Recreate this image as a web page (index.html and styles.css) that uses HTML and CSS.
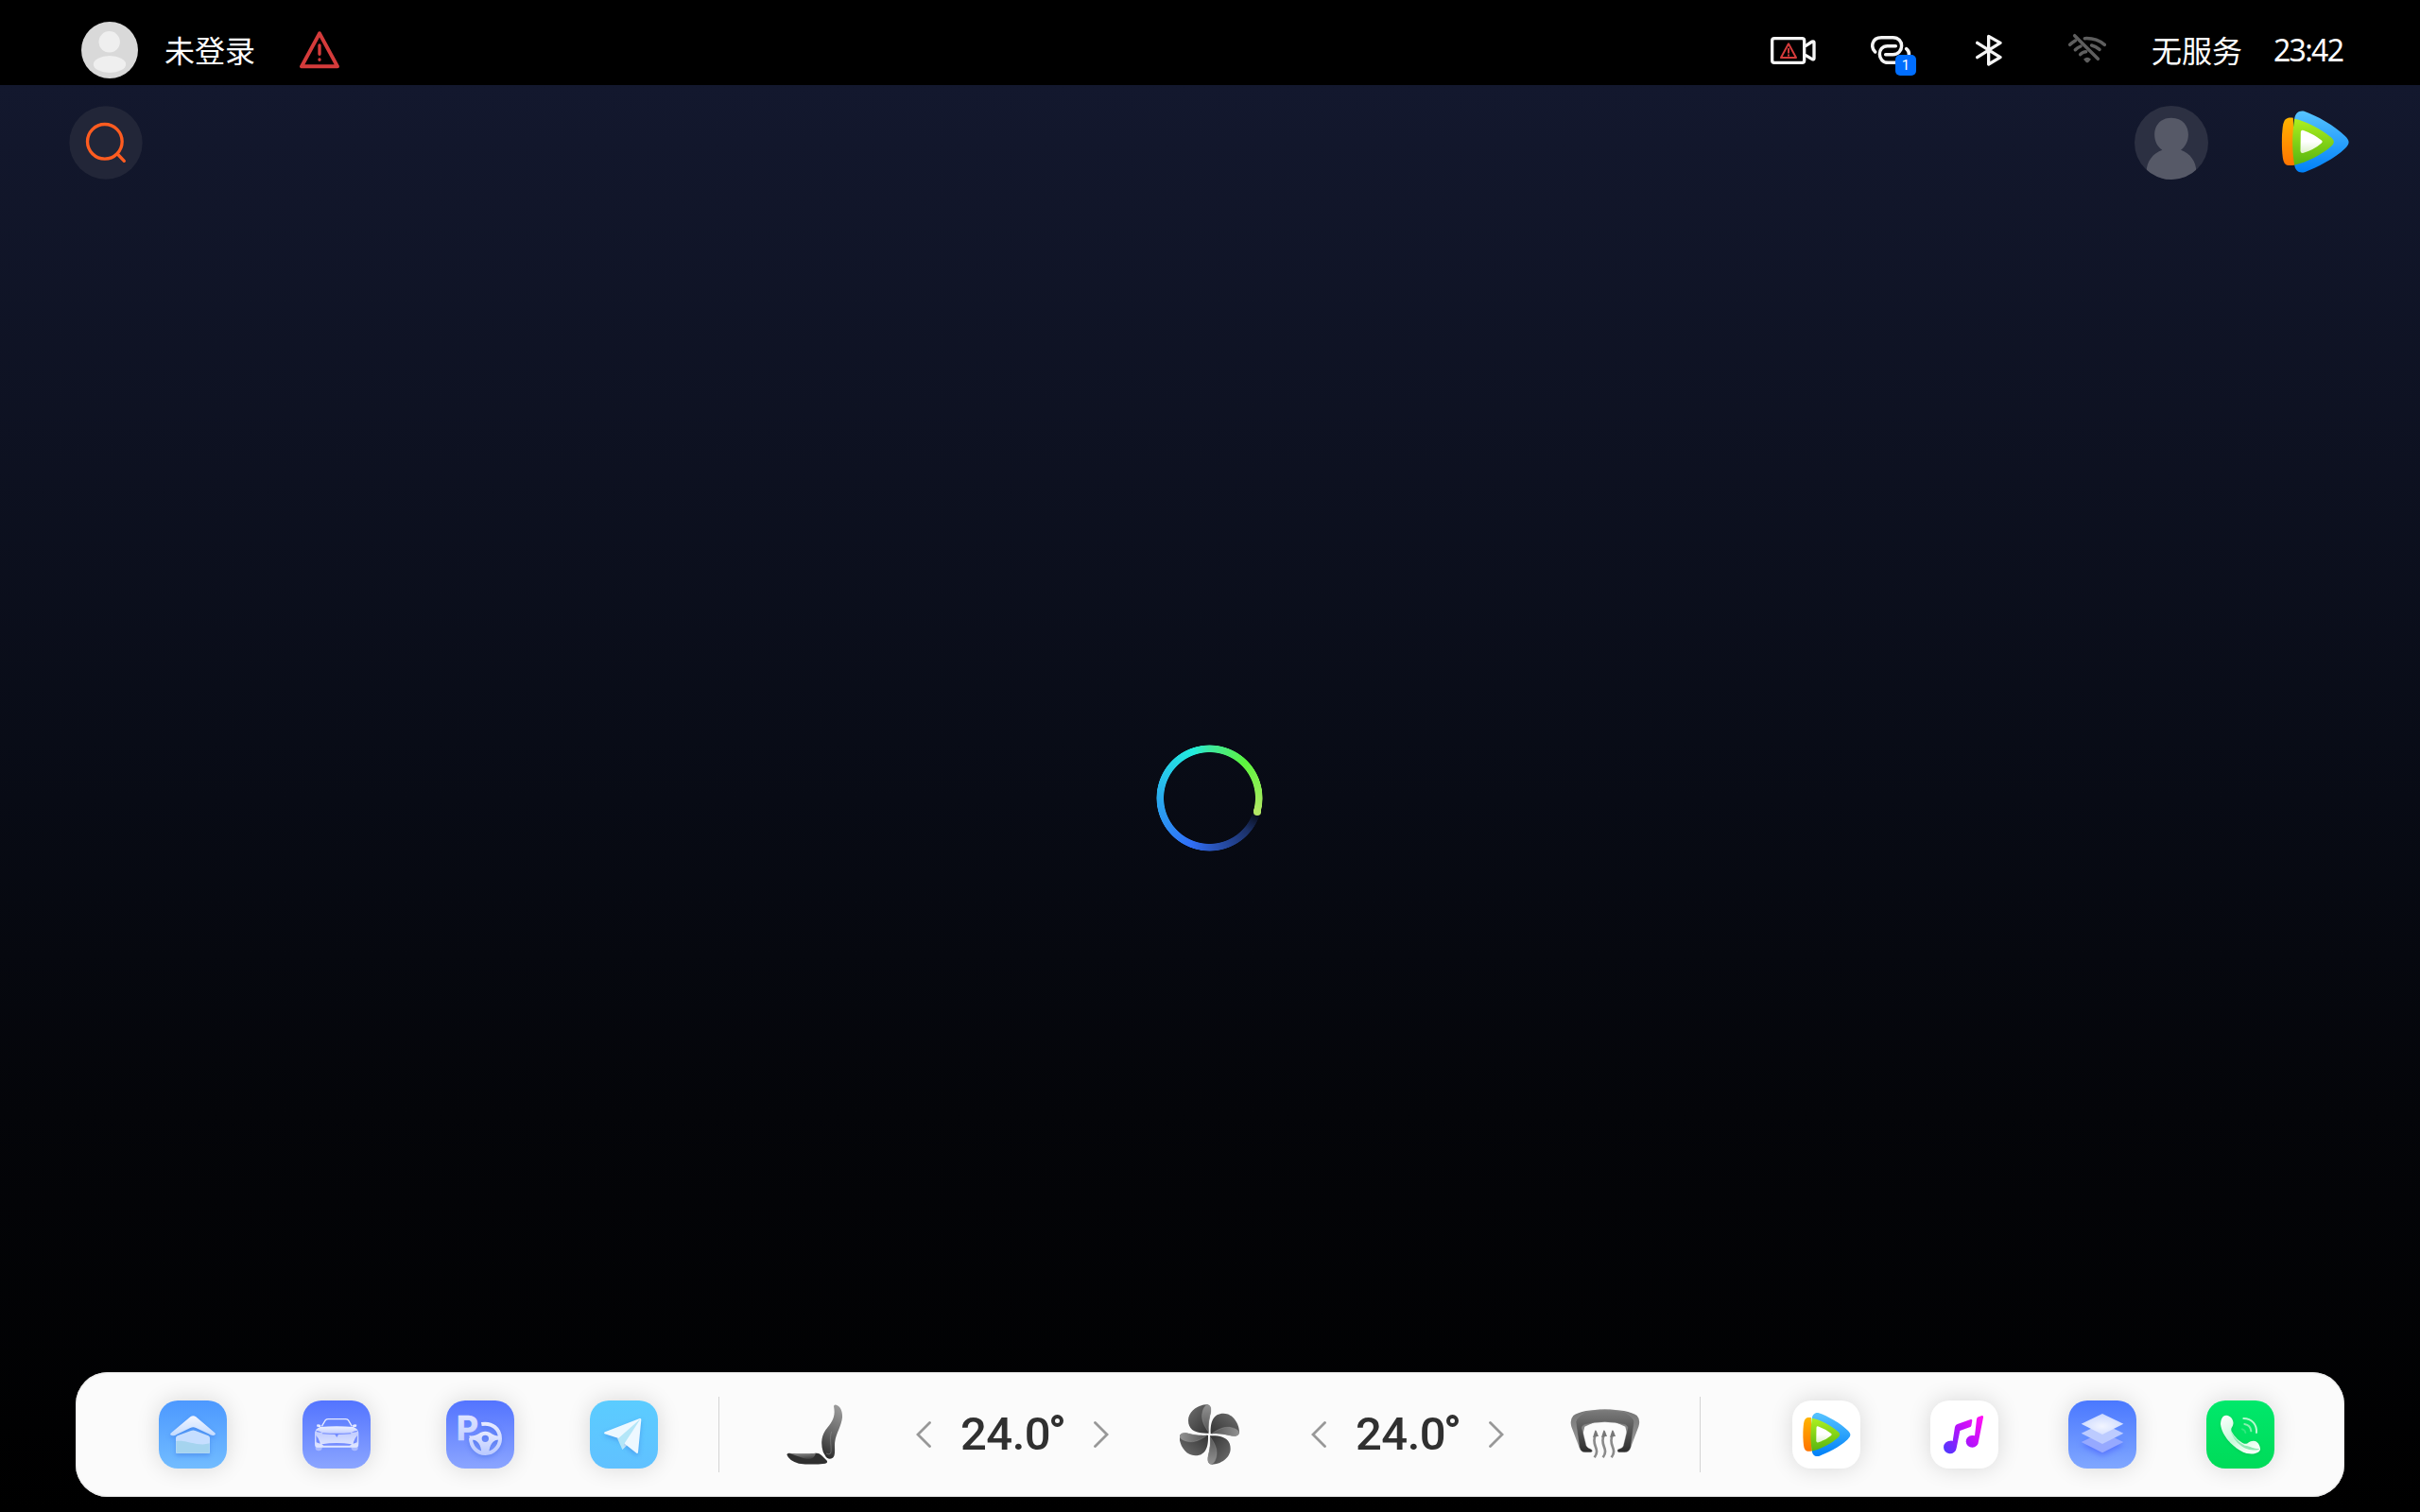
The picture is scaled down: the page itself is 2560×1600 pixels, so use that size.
FILE: index.html
```html
<!DOCTYPE html>
<html lang="zh-CN">
<head>
<meta charset="utf-8">
<title>车机桌面</title>
<link rel="stylesheet" href="styles.css">
</head>
<body>
<svg class="defs" width="0" height="0" aria-hidden="true">
  <defs>
    <linearGradient id="vBlue" x1="0" y1="0" x2="0" y2="1"><stop offset="0" stop-color="#57c4ff"/><stop offset="1" stop-color="#0080f8"/></linearGradient>
    <linearGradient id="vOrange" x1="0" y1="0" x2="0" y2="1"><stop offset="0" stop-color="#ffb400"/><stop offset="1" stop-color="#ff7300"/></linearGradient>
    <linearGradient id="vGreen" x1="0" y1="0" x2="0" y2="1"><stop offset="0" stop-color="#adf01f"/><stop offset="1" stop-color="#58b50f"/></linearGradient>
    <linearGradient id="vWhite" x1="0" y1="0" x2="0" y2="1"><stop offset=".5" stop-color="#fff"/><stop offset="1" stop-color="#dff2cc"/></linearGradient>
    <linearGradient id="glass" x1="0" y1="0" x2="0" y2="1"><stop offset="0" stop-color="#f2f6ff"/><stop offset="1" stop-color="#c3dbff"/></linearGradient>
    <linearGradient id="lilac" x1="0" y1="0" x2="0" y2="1"><stop offset="0" stop-color="#e6eaff"/><stop offset="1" stop-color="#bccbff"/></linearGradient>
    <linearGradient id="carBody" x1="0" y1="0" x2="0" y2="1"><stop offset="0" stop-color="#eef1ff"/><stop offset=".35" stop-color="#c3ceff"/><stop offset="1" stop-color="#e2e8ff"/></linearGradient>
    <linearGradient id="seatBack" x1=".6" y1="0" x2=".4" y2="1"><stop offset="0" stop-color="#9a9a9a"/><stop offset=".5" stop-color="#6a6a6a"/><stop offset="1" stop-color="#2c2c2c"/></linearGradient>
    <linearGradient id="seatPad" x1=".3" y1="0" x2=".6" y2="1"><stop offset="0" stop-color="#8c8c8c"/><stop offset="1" stop-color="#3c3c3c"/></linearGradient>
    <linearGradient id="bladeDark" x1="0" y1="0" x2="1" y2="1"><stop offset="0" stop-color="#707070"/><stop offset="1" stop-color="#303030"/></linearGradient>
    <linearGradient id="bladeLight" x1="0" y1="0" x2="0" y2="1"><stop offset="0" stop-color="#929292"/><stop offset="1" stop-color="#555"/></linearGradient>
    <linearGradient id="screenOuter" x1="0" y1="0" x2="0" y2="1"><stop offset="0" stop-color="#747474"/><stop offset="1" stop-color="#9b9b9b"/></linearGradient>
    <linearGradient id="screenInner" x1="0" y1="0" x2="0" y2="1"><stop offset="0" stop-color="#7c7c7c"/><stop offset="1" stop-color="#2c2c2c"/></linearGradient>
    <linearGradient id="note" gradientUnits="userSpaceOnUse" x1="560" y1="225" x2="680" y2="125"><stop offset="0" stop-color="#5038ff"/><stop offset=".5" stop-color="#b312fb"/><stop offset="1" stop-color="#ff10f4"/></linearGradient>
    <radialGradient id="layerTop" cx=".5" cy=".6" r=".7"><stop offset="0" stop-color="#f2f5ff"/><stop offset="1" stop-color="#c4d3ff"/></radialGradient>
    <linearGradient id="handset" x1="0" y1="0" x2=".6" y2="1"><stop offset="0" stop-color="#fff"/><stop offset=".6" stop-color="#c9fadb"/><stop offset="1" stop-color="#f4fff7"/></linearGradient>
    <symbol id="play" viewBox="0 0 214 198">
      <path fill="url(#vBlue)" d="M41 27C43 9 55-2 72 2C110 15 170 48 202 81C217 96 217 105 202 120C170 152 110 182 75 195C56 201 43 191 41 172Z"/>
      <path fill="url(#vOrange)" d="M37 23C14 21 8 28 4 50C0 80 0 119 4 149C8 173 16 177 41 173Z"/>
      <path fill="url(#vGreen)" d="M41 26C75 32 125 58 157 85C169 95 169 104 157 114C125 142 80 164 41 173C33 125 33 75 41 26Z"/>
      <path fill="url(#vWhite)" d="M61 68Q62 60 70 63Q103 75 126 94Q133 99 126 104Q103 124 70 134Q61 137 60 128Z"/>
    </symbol>
  </defs>
</svg>

<div class="screen">
  <div class="status">
    <svg class="user" viewBox="0 0 60 60"><circle cx="30" cy="30" r="30" fill="#d9d9d9"/><circle cx="29.700" cy="21.300" r="11.200" fill="#efefef"/><ellipse cx="30" cy="45" rx="17.200" ry="9" fill="#efefef"/></svg>
    <span class="label login">未登录</span>
    <svg class="warn" viewBox="771 78 126 162" fill="none" stroke="#d53b3b" stroke-linecap="round" stroke-linejoin="round"><path stroke-width="12" d="M834 106L777 211H891Z"/><path stroke-width="10" d="M834 144V172M834 189V190"/></svg>

    <div class="tray">
      <svg class="camera" viewBox="69 48 144 162" fill="none" stroke="#f5f5f5" stroke-width="10" stroke-linejoin="round" stroke-linecap="round"><rect x="74" y="92" width="102" height="77" rx="7"/><path d="M181 115L201 102Q207 100 207 105V155Q207 160 201 158L181 146"/><g stroke="#d53b3b" stroke-width="6"><path d="M126 109L102 153H150Z"/><path d="M126 125V137M126 145V146"/></g></svg>
      <div class="link">
        <svg viewBox="387 48 144 162" fill="none" stroke="#f5f5f5" stroke-width="10.500" stroke-linecap="round"><path d="M401 135C387 122 388 89 421 89H457C495 89 493 143 457 143H434M466 116H440C406 116 407 169 442 169H480C507 169 516 138 500 125"/></svg>
        <span class="badge">1</span>
      </div>
      <svg class="bt" viewBox="720 48 84 162" fill="none" stroke="#f5f5f5" stroke-width="10" stroke-linejoin="round" stroke-linecap="round"><path d="M725 106L798 152L761 174V85L798 106L725 152"/></svg>
      <svg class="wifi" viewBox="1014 48 120 162" fill="none" stroke="#5e5e5e" stroke-width="10.500" stroke-linecap="round"><path d="M1034 83L1108 157"/><path d="M1019 112Q1026 105 1036 99M1066 92Q1102 90 1129 112"/><path d="M1036 128Q1043 121 1053 117M1088 114Q1101 117 1113 127"/><path d="M1052 143Q1060 134 1070 134"/><path fill="#5e5e5e" stroke="none" d="M1062 158Q1074 147 1086 158L1078 167Q1074 170 1070 167Z"/></svg>
      <span class="label service">无服务</span>
      <span class="clock">23:42</span>
    </div>
  </div>

  <div class="content">
    <div class="toolbar">
      <svg class="round" viewBox="39 336 234 234"><circle cx="156" cy="453" r="116" fill="#222638"/><g fill="none" stroke="#ff5c20" stroke-width="10"><circle cx="152.500" cy="449.500" r="55"/><path stroke-linecap="round" d="M193 489L214 511"/></g></svg>
      <svg class="round profile" viewBox="54 336 234 234"><clipPath id="disc"><circle cx="171" cy="453" r="117"/></clipPath><circle cx="171" cy="453" r="117" fill="#2c3042"/><path clip-path="url(#disc)" fill="#565967" d="M142 476C103 450 109 374 171 374C233 374 239 450 201 476C230 486 250 512 250 545V580H92V545C92 512 113 486 142 476Z"/></svg>
      <svg class="logo" viewBox="519 336 219 234"><use href="#play" x="520" y="351" width="215" height="198"/></svg>
    </div>

    <div class="spinner"><i></i></div>

    <div class="dock">
      <svg class="app home" viewBox="294 126 216 216">
        <path class="lift" fill="url(#glass)" d="M394 178Q403 171 412 178L472 229Q477 235 468 237Q460 238 452 232L412 213Q403 208 394 213L352 233Q343 239 335 237Q326 235 334 228Z"/>
        <path class="lift" fill="#c6deff" d="M348 245Q348 240 353 238L396 222Q403 219 410 222L451 238Q456 240 456 245V290Q456 294 452 294H352Q348 294 348 290Z"/>
        <path fill="#a5d4ef" d="M349 255C380 249 420 274 455 262V290Q455 293 452 293H352Q349 293 349 290Z"/>
      </svg>
      <svg class="app car" viewBox="750 126 216 216">
        <path fill="#aabaff" d="M791 268H812V280Q808 288 797 285Q791 284 791 278ZM926 268H905V280Q909 288 920 285Q926 284 926 278Z"/>
        <path fill="none" stroke="#e6ebff" stroke-width="4" stroke-linejoin="round" d="M811 208L823 188Q826 185 832 185H886Q892 185 895 188L907 208"/>
        <path fill="#e6ebff" d="M795 203Q800 200 808 204L807 211L796 209ZM922 203Q917 200 909 204L910 211L921 209Z"/>
        <path fill="url(#carBody)" d="M806 210Q858 205 911 210Q925 215 928 228V264Q928 275 920 275H797Q789 275 789 264V228Q792 215 806 210Z"/>
        <path fill="#7189ff" d="M793 221Q803 221 813 229L795 226ZM925 221Q914 221 904 229L922 226ZM814 229Q858 232 903 229L904 232Q858 236 813 232Z"/>
        <path fill="#748cff" d="M853 234H864L859 243ZM793 237Q803 247 806 263L794 259ZM924 237Q914 247 911 263L923 259ZM811 265Q858 257 906 265L900 269H817Z"/>
      </svg>
      <svg class="app parking" viewBox="66 96 216 216">
        <text class="p-mark" x="98" y="223">P</text>
        <g class="lift" fill="none" stroke="url(#lilac)"><path stroke-width="12" d="M178 171C212 165 237 187 237 217C237 243 216 264 190 264C164 264 144 243 144 215"/><path fill="url(#lilac)" fill-rule="evenodd" stroke="none" d="M139 208C166 211 170 194 190 194C211 194 212 211 238 208V221C217 219 203 234 202 264H178C177 234 164 219 142 221ZM190 206A11 11 0 1 0 190 228A11 11 0 1 0 190 206Z"/></g>
      </svg>
      <svg class="app plane" viewBox="522 96 216 216">
        <path fill="#d0f1fc" d="M608 216L622 231L625 252L639 239L684 154Z"/>
        <path class="lift" fill="#edf8ff" d="M680 153Q685 152 685 157L675 261Q674 265 670 263L634 235L615 217L569 202Q565 199 570 196Z"/>
        <path fill="#b3e6f8" d="M683 154L632 232L625 252L610 218Z"/>
      </svg>
      <span class="divider"></span>
      <svg class="seat" viewBox="96 106 180 192">
        <path fill="#2f2f2f" d="M97 266Q98 261 104 261Q150 266 190 261Q199 260 207 268L223 284Q229 291 219 294Q175 299 135 294Q104 286 97 266Z"/>
        <path fill="url(#seatPad)" d="M106 262Q150 266 189 261C184 278 170 284 151 278Q125 269 106 262Z"/>
        <path fill="url(#seatBack)" d="M246 112Q247 106 254 108C269 113 274 130 273 148C270 179 248 205 249 238C250 262 250 279 233 279C222 279 220 271 212 257C204 231 207 207 220 188C240 162 253 148 246 112Z"/>
        <path fill="none" stroke="#969696" stroke-width="1.500" d="M239 193C231 212 241 246 236 262Q232 267 222 262"/>
      </svg>
      <div class="temp">
        <svg class="chev" viewBox="0 0 16 28"><path d="M14.500 1.500L2 14L14.500 26.500"/></svg>
        <span class="value"><span class="digits">24.0</span><i class="degree"></i></span>
        <svg class="chev" viewBox="0 0 16 28"><path d="M1.500 1.500L14 14L1.500 26.500"/></svg>
      </div>
      <svg class="fan" viewBox="144 106 192 192">
        <defs><g id="blade"><path fill="url(#bladeDark)" d="M233 198C198 199 171 190 171 157C171 126 205 107 229 107C243 107 244 120 242 133C237 155 233 170 236 198Z"/><path fill="url(#bladeLight)" stroke="#a2a2a2" stroke-width="1" d="M235 194C222 175 211 155 216 132C219 117 226 108 232 108C244 110 244 122 242 133C237 155 234 174 236 194Z"/></g></defs>
        <use href="#blade"/><use href="#blade" transform="rotate(90 238 202)"/><use href="#blade" transform="rotate(180 238 202)"/><use href="#blade" transform="rotate(270 238 202)"/>
      </svg>
      <div class="temp">
        <svg class="chev" viewBox="0 0 16 28"><path d="M14.500 1.500L2 14L14.500 26.500"/></svg>
        <span class="value"><span class="digits">24.0</span><i class="degree"></i></span>
        <svg class="chev" viewBox="0 0 16 28"><path d="M1.500 1.500L14 14L1.500 26.500"/></svg>
      </div>
      <svg class="defrost" viewBox="183 109 222 192">
        <path fill="url(#screenOuter)" d="M213 249L187 180Q181 158 193 145C225 119 362 119 395 145Q407 158 400 180L374 249L358 180L293 150L229 180Z"/>
        <path fill="url(#screenInner)" stroke="#999" stroke-width="1" d="M231 261Q216 261 213 246L201 165Q201 153 229 134Q293 118 358 134Q387 153 386 165L375 246Q370 261 356 261H337Q330 258 335 252Q349 249 352 241L366 183Q365 178 358 174Q293 156 228 174Q220 178 220 183L234 241Q238 249 250 252Q257 258 249 261Z"/>
        <g id="heat" fill="none" stroke="#8b8b8b" stroke-width="8"><path d="M260 278C281 248 248 242 263 207"/><path fill="#777" stroke="none" d="M262 192Q265 191 267 195L273 211H267L255 214Z"/></g>
        <use href="#heat" x="27"/><use href="#heat" x="54"/>
      </svg>
      <span class="divider"></span>
      <svg class="app video" viewBox="78 66 216 216"><use href="#play" x="110" y="104" width="154" height="140"/></svg>
      <svg class="app music" viewBox="516 66 216 216"><g fill="url(#note)"><path d="M579 194Q584 193 587 195L594 150Q596 143 602 141L644 126Q649 125 649 130L646 146Q645 150 641 151L610 162L599 217A20.500 20.500 0 1 1 579 194Z"/><path d="M648 177Q653 176 657 178L663 125Q664 119 669 118L680 114Q685 114 684 120L669 196A20 19 0 1 1 648 177Z"/></g></svg>
      <svg class="app layers" viewBox="84 126 216 216">
        <path class="glow" fill="#96a9ff" d="M125 258L192 226L259 258L192 292Z"/>
        <path fill="#bccbff" d="M125 230L192 198L259 230L192 264Z"/>
        <path fill="url(#layerTop)" d="M125 200L192 168L259 200L192 234Z"/>
      </svg>
      <svg class="app phone" viewBox="522 126 216 216">
        <path class="lift" fill="url(#handset)" d="M586 173C601 174 610 191 607 202C605 212 598 213 602 224C611 241 628 257 642 263C654 266 656 254 671 254C684 253 694 269 693 282C689 293 673 298 650 294C610 282 570 237 567 201C568 184 574 172 586 173Z"/>
        <path fill="#8eeab3" d="M598 219C606 241 625 260 644 269C662 271 670 279 691 279Q686 285 665 283C638 281 607 254 598 219Z"/>
        <g fill="none" stroke-width="6" stroke-linecap="round"><path stroke="#b6f9cf" d="M640 183C667 183 683 203 681 228"/><path stroke="#86efae" d="M643 201Q662 204 664 223"/><path stroke="#30e77e" d="M636 217Q645 220 646 228"/></g>
      </svg>
    </div>
  </div>
</div>
</body>
</html>
```
FILE: styles.css
```css
* { box-sizing: border-box; }
body { margin: 0; background: #000; font-family: "Noto Sans CJK SC", sans-serif; }
svg { display: block; flex: none; }
.defs { position: absolute; }
.screen { width: 2560px; height: 1600px; overflow: hidden; display: grid; grid-template-rows: 90px 1fr; }

/* status bar */
.status { display: flex; align-items: center; padding: 16px 78px 0 86px; background: #000; color: #fff; }
.user { width: 60px; height: 60px; }
.label { width: 96px; padding-bottom: 3px; font-size: 32px; line-height: 48px; white-space: nowrap; }
.login { margin: 0 47px 0 28px; }
.warn { width: 42px; height: 54px; }
.tray { display: flex; align-items: center; margin-left: auto; }
.camera { width: 48px; height: 54px; margin-right: 58px; }
.link { position: relative; width: 48px; height: 54px; margin-right: 63px; }
.link svg { width: 48px; height: 54px; }
.badge { position: absolute; right: 0; bottom: 0; width: 22px; height: 22px; border-radius: 5px; background: #006eff; font: 15px/22px Roboto, sans-serif; text-align: center; }
.bt { width: 28px; height: 54px; margin-right: 70px; }
.wifi { width: 40px; height: 54px; margin-right: 48px; }
.service { margin-right: 33px; }
.clock { width: 77px; font: 32px/46px "Noto Sans", sans-serif; letter-spacing: -1.700px; white-space: nowrap; }

/* page body */
.content { display: grid; grid-template-rows: 1fr auto 1fr; background: linear-gradient(#13182e, #080b15 50%, #040509 72%, #000); }
.toolbar { display: flex; align-items: flex-start; padding: 22px 74px 0 73px; }
.round { width: 78px; height: 78px; }
.profile { margin: 0 77px 0 auto; }
.logo { width: 73px; height: 78px; }

.spinner { position: relative; justify-self: center; width: 113px; height: 113px; margin: 0 1px 1px 0; }
.spinner::before { content: ""; display: block; height: 100%; border-radius: 50%;
  background: conic-gradient(#3ee8a0 0deg, #5df43e 45deg, #b2e865 106deg, transparent 107deg, #1b3066 130deg, #2a55bb 175deg, #306ff8 202deg, #2b9cf0 255deg, #27c5eb 295deg, #22ecdf 340deg, #3ee8a0 360deg);
  -webkit-mask: radial-gradient(closest-side, transparent 48px, #000 48.800px, #000 55.700px, transparent 56.400px);
  mask: radial-gradient(closest-side, transparent 48px, #000 48.800px, #000 55.700px, transparent 56.400px); }
.spinner i { position: absolute; left: 103px; top: 67px; width: 7.500px; height: 7.500px; border-radius: 50%; background: #b2e865; }

/* dock */
.dock { align-self: end; display: flex; align-items: center; height: 132px; margin: 0 80px 16px; padding-left: 88px; border-radius: 34px; background: #fbfbfb; box-shadow: inset 0 0 1px 1px #e6e6e6; }
.app { width: 72px; height: 72px; border-radius: 20px; box-shadow: 0 0 24px rgba(0, 0, 0, .14); }
.app + .app { margin-left: 80px; }
.app .lift { filter: drop-shadow(0 7px 8px rgba(30, 80, 210, .3)); }
.home { background: linear-gradient(#4c98ff, #72bcff); }
.car, .parking { background: linear-gradient(#5374ff, #8ba5ff); }
.p-mark { font: 700 108px Inter, sans-serif; fill: url(#lilac); stroke: url(#lilac); stroke-width: 2px; stroke-linejoin: round; }
.plane { background: linear-gradient(#5bccff, #60c1ff); }
.divider { width: 1px; height: 80px; background: #d4d4d4; margin: 0 71px 0 64px; flex: none; }
.seat { width: 60px; height: 64px; margin: 0 77px 0 0; }
.temp { display: flex; align-items: center; justify-content: space-between; width: 204px; flex: none; }
.chev { width: 16px; height: 28px; fill: none; stroke: #989898; stroke-width: 2.800; stroke-linecap: round; }
.value { display: flex; align-items: flex-start; width: 110px; height: 42px; color: #303030; }
.digits { width: 96px; font: 500 49px/42px Roboto, sans-serif; letter-spacing: -.500px; white-space: nowrap; }
.degree { width: 13px; height: 13px; border: 4px solid #303030; border-radius: 50%; flex: none; }
.fan { width: 64px; height: 64px; margin: 0 75px; }
.defrost { width: 74px; height: 64px; margin-left: 70px; }
.defrost + .divider { margin: 0 97px 0 63px; }
.video, .music { background: #fff; }
.app.music, .app.layers, .app.phone { margin-left: 74px; }
.layers { background: linear-gradient(#4a78ff, #80a7ff); }
.glow { filter: drop-shadow(0 8px 9px rgba(65, 85, 255, .6)); }
.phone { background: linear-gradient(#00e86b, #00db59); }
.phone .lift { filter: drop-shadow(0 3px 5px rgba(0, 150, 65, .3)); }
```
